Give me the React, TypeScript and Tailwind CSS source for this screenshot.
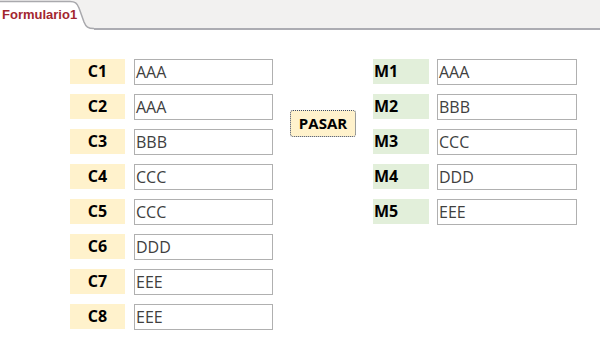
const LEFT = [
  { label: "C1", value: "AAA" },
  { label: "C2", value: "AAA" },
  { label: "C3", value: "BBB" },
  { label: "C4", value: "CCC" },
  { label: "C5", value: "CCC" },
  { label: "C6", value: "DDD" },
  { label: "C7", value: "EEE" },
  { label: "C8", value: "EEE" },
];

const RIGHT = [
  { label: "M1", value: "AAA" },
  { label: "M2", value: "BBB" },
  { label: "M3", value: "CCC" },
  { label: "M4", value: "DDD" },
  { label: "M5", value: "EEE" },
];

const FONT = "font-['Open_Sans','Liberation_Sans',sans-serif]";

function Field({ value, width }: { value: string; width: string }) {
  return (
    <div
      className={`flex h-[26px] ${width} items-center border border-[#b0b0b0] bg-white pb-[1px] pl-[1px] text-[16px] leading-none text-[#404040]`}
    >
      {value}
    </div>
  );
}

function TabHeader() {
  return (
    <div className="flex h-[30px] bg-[#f2f1f0]">
      <div className="relative h-[30px] w-[94px] shrink-0">
        <svg className="absolute inset-0" width="94" height="30" viewBox="0 0 94 30">
          <path
            d="M0 1.5 H70 C75 1.5 77 3 79 8 L84 22 C86 27 88 28.5 94 28.5 V30 H0 Z"
            fill="#ffffff"
          />
          <path
            d="M0 1.5 H70 C75 1.5 77 3 79 8 L84 22 C86 27 88 28.5 94 28.5"
            fill="none"
            stroke="#a9a9ad"
            strokeWidth="1.5"
          />
        </svg>
        <span className="relative block pl-[2px] pt-[7px] font-['Liberation_Sans',sans-serif] text-[13px] font-bold leading-[16px] text-[#a3262f]">
          Formulario1
        </span>
      </div>
      <div className="h-[30px] flex-1 border-b-2 border-[#acacb2]" />
    </div>
  );
}

export default function App() {
  return (
    <div className={`h-[345px] w-[600px] overflow-hidden bg-white ${FONT}`}>
      <TabHeader />
      <div className="flex items-start pl-[70px] pt-[29px]">
        <div className="flex flex-col gap-[9px]">
          {LEFT.map((row) => (
            <div key={row.label} className="flex items-start gap-[9px]">
              <div className="flex h-[25px] w-[55px] items-center justify-center bg-[#fff2cc] pb-[1px] text-[16px] font-bold leading-none text-black">
                {row.label}
              </div>
              <Field value={row.value} width="w-[139px]" />
            </div>
          ))}
        </div>
        <button className="ml-[17px] mt-[51px] flex h-[27px] w-[66px] items-center justify-center rounded-[3px] border border-dotted border-[#3b4a6b] bg-[#fff2cc] text-[15px] font-bold text-black">
          PASAR
        </button>
        <div className="ml-[17px] flex flex-col gap-[9px]">
          {RIGHT.map((row) => (
            <div key={row.label} className="flex items-start gap-[8px]">
              <div className="flex h-[25px] w-[56px] items-center bg-[#e2efda] pb-[1px] pl-[1px] text-[16px] font-bold leading-none text-black">
                {row.label}
              </div>
              <Field value={row.value} width="w-[140px]" />
            </div>
          ))}
        </div>
      </div>
    </div>
  );
}
